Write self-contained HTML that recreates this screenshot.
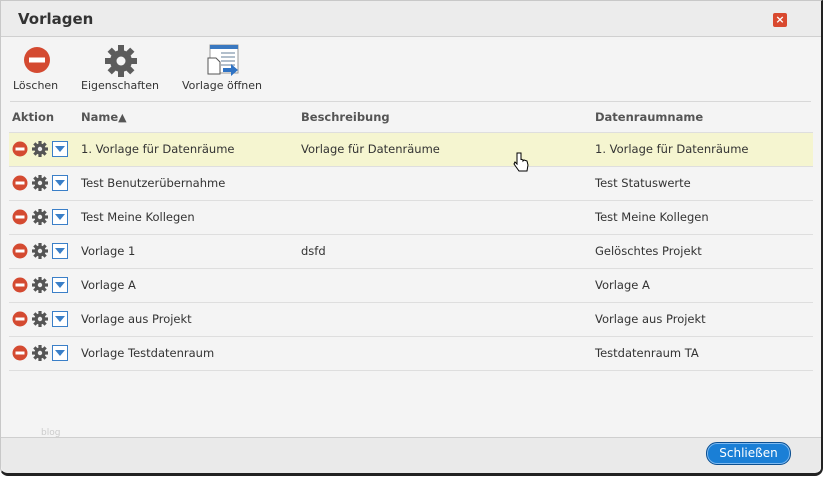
<!DOCTYPE html>
<html><head><meta charset="utf-8"><style>
*{margin:0;padding:0;box-sizing:border-box}
body{width:826px;height:478px;background:#fff;font-family:"DejaVu Sans","Liberation Sans",sans-serif;font-size:11.5px;color:#333;position:relative;overflow:hidden}
.dlg{position:absolute;left:0;top:0;width:823px;height:476px;background:#f4f4f4;border:1px solid #c8c8c8;border-right:2px solid #222;border-bottom:3px solid #222;border-radius:0 0 8px 8px}
.hdr{position:absolute;left:0;top:0;right:0;height:36px;background:#ececec;border-bottom:1px solid #d0d0d0}
.hdr h1{position:absolute;left:17px;top:9px;font-size:15px;font-weight:bold;color:#333;font-family:"DejaVu Sans",sans-serif}
.x{position:absolute;left:772px;top:12px;width:14px;height:14px;background:#d9492f;border-radius:2px;color:#fff;font-size:11px;font-weight:bold;text-align:center;line-height:14px}
.tb{position:absolute;top:78px;font-size:11px;color:#333}
.tl{position:absolute;left:9px;right:10px;top:100px;border-top:1px solid #d8d8d8}
table{position:absolute;left:8px;top:101px;width:804px;border-collapse:collapse}
td,th{height:34px;text-align:left;border-bottom:1px solid #dedede;padding:0;white-space:nowrap}
th{font-weight:bold;color:#555;height:30px}
tr.h td{background:#f5f5d0}
.ic{display:inline-block;vertical-align:middle}
.ft{position:absolute;left:0;right:0;bottom:0;top:436px;background:#eaeaea;border-top:1px solid #cfcfcf;border-radius:0 0 8px 8px}
.btn{position:absolute;left:705px;top:441px;width:85px;height:23px;border-radius:11px;background:#1a7fd6;border:1px solid #0b4f91;box-shadow:inset 0 0 0 1px #7fbaf0;color:#fff;font-size:12px;text-align:center;line-height:21px}
</style></head><body>
<div class="dlg">
<div class="hdr"><h1>Vorlagen</h1><div class="x">×</div></div>
<svg style="position:absolute;left:22px;top:45px" width="28" height="28"><circle cx="14" cy="14" r="13" fill="#d44a31"/><rect x="6" y="11.5" width="16" height="5" fill="#fff"/></svg>
<svg style="position:absolute;left:103px;top:43px" width="34" height="34" viewBox="0 0 34 34"><g fill="#5c5c5c" transform="translate(17 17)"><circle r="11"/><g id="t"><rect x="-3" y="-16" width="6" height="8"/></g><use href="#t" transform="rotate(45)"/><use href="#t" transform="rotate(90)"/><use href="#t" transform="rotate(135)"/><use href="#t" transform="rotate(180)"/><use href="#t" transform="rotate(225)"/><use href="#t" transform="rotate(270)"/><use href="#t" transform="rotate(315)"/></g><circle cx="17" cy="17" r="4.5" fill="#f4f4f4"/></svg>
<svg style="position:absolute;left:206px;top:43px" width="34" height="34"><rect x="3" y="1" width="28" height="28" fill="#fff" stroke="#999"/><rect x="3" y="1" width="28" height="4" fill="#3a78c0"/><g stroke="#9ab" stroke-width="1.5"><path d="M14 9h14M14 13h14M14 17h14M14 21h14"/></g><path d="M1 14h8l4 4v12H1z" fill="#fff" stroke="#555"/><path d="M16 24h8v-4l7 6-7 6v-4h-8z" fill="#2f73c4"/></svg>
<div class="tb" style="left:12px">Löschen</div>
<div class="tb" style="left:80px">Eigenschaften</div>
<div class="tb" style="left:181px">Vorlage öffnen</div>
<div class="tl"></div>
<table>
<tr><th style="width:72px;padding-left:3px">Aktion</th><th style="width:220px">Name<span style="font-size:11px">▲</span></th><th style="width:294px">Beschreibung</th><th>Datenraumname</th></tr>
<tr class="h"><td>A</td><td>1. Vorlage für Datenräume</td><td>Vorlage für Datenräume</td><td>1. Vorlage für Datenräume</td></tr>
<tr><td>A</td><td>Test Benutzerübernahme</td><td></td><td>Test Statuswerte</td></tr>
<tr><td>A</td><td>Test Meine Kollegen</td><td></td><td>Test Meine Kollegen</td></tr>
<tr><td>A</td><td>Vorlage 1</td><td>dsfd</td><td>Gelöschtes Projekt</td></tr>
<tr><td>A</td><td>Vorlage A</td><td></td><td>Vorlage A</td></tr>
<tr><td>A</td><td>Vorlage aus Projekt</td><td></td><td>Vorlage aus Projekt</td></tr>
<tr><td>A</td><td>Vorlage Testdatenraum</td><td></td><td>Testdatenraum TA</td></tr>
</table>
<div style="position:absolute;left:40px;top:427px;font-size:9px;color:#ccc">blog</div>
<div class="ft"></div>
<div class="btn">Schließen</div>
</div>
<script>
var ac='<svg class="ic" width="62" height="18" style="margin-left:3px"><circle cx="8" cy="9" r="7.5" fill="#d44a31"/><rect x="3.5" y="7.5" width="9" height="3" fill="#fff"/><g transform="translate(28 9)" fill="#555"><circle r="5.5"/><rect x="-1.6" y="-8" width="3.2" height="16"/><rect x="-8" y="-1.6" width="16" height="3.2"/><rect x="-1.6" y="-8" width="3.2" height="16" transform="rotate(45)"/><rect x="-1.6" y="-8" width="3.2" height="16" transform="rotate(-45)"/><circle r="2.2" fill="#eee"/></g><rect x="40.5" y="1.5" width="15" height="15" fill="#fff" stroke="#3a7fc8"/><path d="M43 6h10l-5 6z" fill="#3a7fc8"/></svg>';
document.querySelectorAll('tr td:first-child').forEach(function(t){t.innerHTML=ac});
</script>
<svg style="position:absolute;left:512px;top:151px" width="18" height="24"><path d="M5 2v11l-2-2-1 2 5 7h8l1-6-1-4-3-1-1 1v-1l-2-1v1V2z" fill="#fff" stroke="#000"/></svg>
</body></html>
